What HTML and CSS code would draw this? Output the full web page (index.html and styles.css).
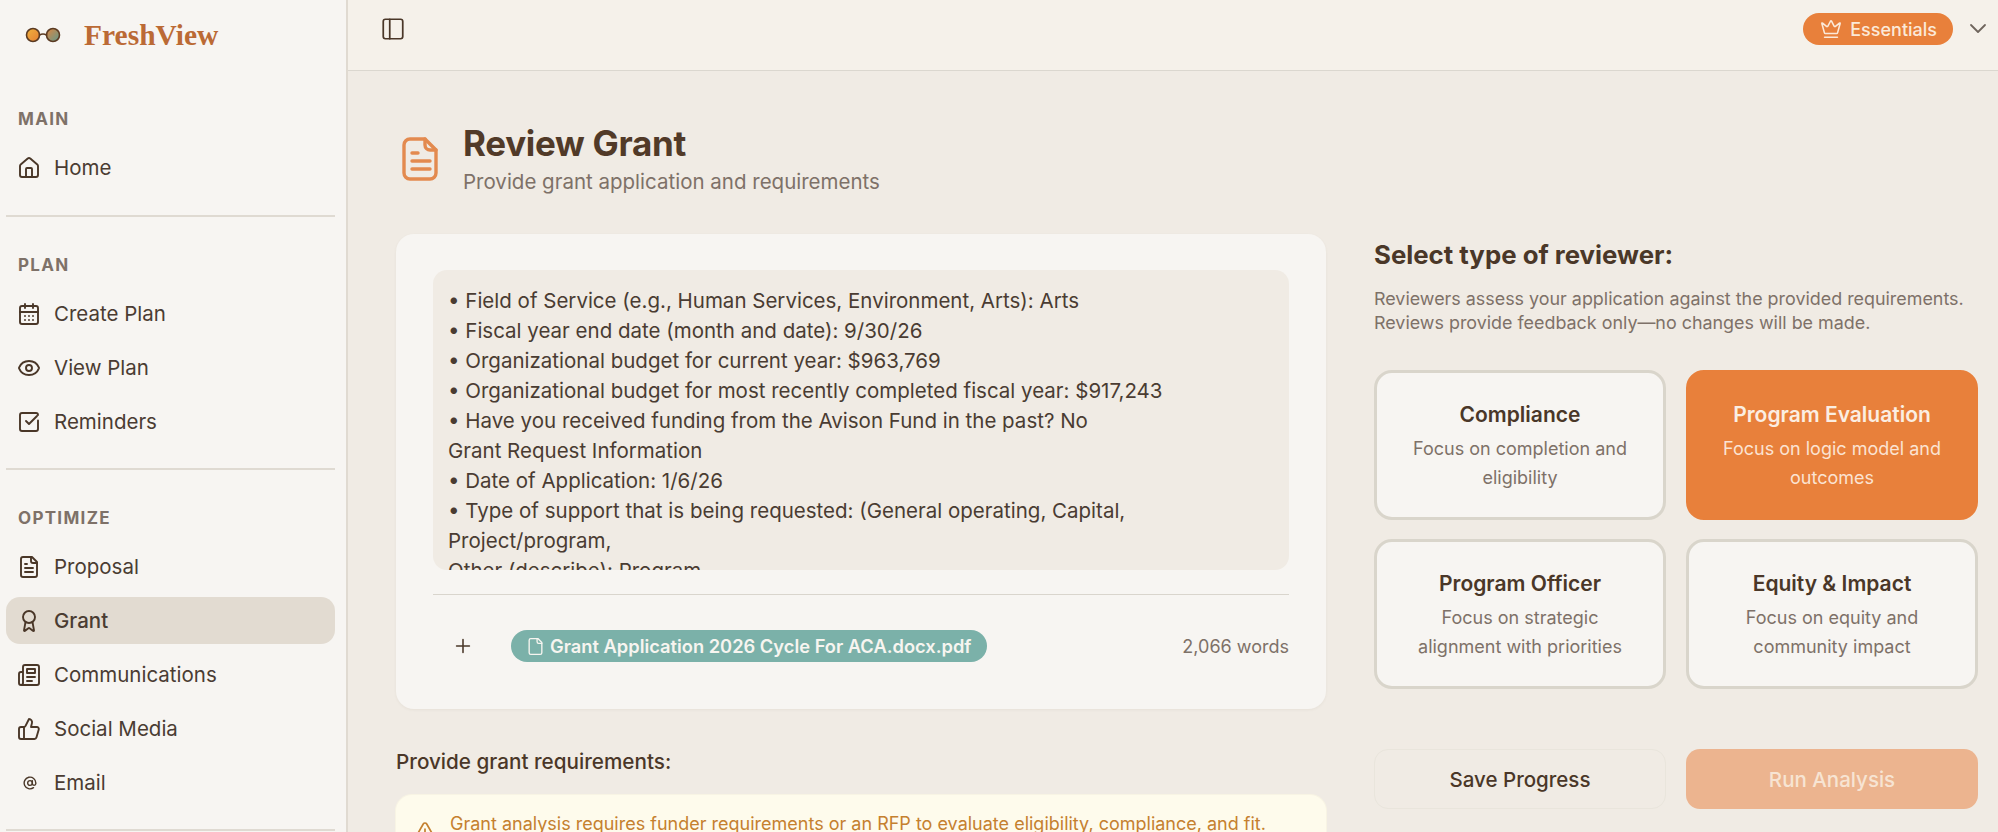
FILE: index.html
```html
<!DOCTYPE html>
<html lang="en">
<head>
<meta charset="utf-8">
<title>FreshView - Review Grant</title>
<link rel="stylesheet" href="styles.css">
</head>
<body>
<div class="app">
  <aside class="sidebar">
    <div class="brand">
      <svg class="brand-logo" viewBox="0 0 36 18">
        <defs>
          <linearGradient id="lensA" x1="0" y1="0" x2="1" y2="1"><stop offset="0" stop-color="#f0b23e"/><stop offset="1" stop-color="#e57f33"/></linearGradient>
          <linearGradient id="lensB" x1="0" y1="0" x2="1" y2="1"><stop offset="0" stop-color="#df8540"/><stop offset="1" stop-color="#5f9a8e"/></linearGradient>
        </defs>
        <circle cx="8" cy="9" r="6.5" fill="url(#lensA)" stroke="#5a3a22" stroke-width="1.6"/>
        <circle cx="28" cy="9" r="6.5" fill="url(#lensB)" stroke="#5a3a22" stroke-width="1.6"/>
        <path d="M14.5 9q3.500-2 7 0" fill="none" stroke="#5a3a22" stroke-width="1.6"/>
      </svg>
      <span class="brand-name">FreshView</span>
    </div>

    <section class="nav-group nav-main">
      <h2 class="nav-label">MAIN</h2>
      <a class="nav-item"><svg class="ico" viewBox="0 0 24 24"><path d="M15 21v-8a1 1 0 0 0-1-1h-4a1 1 0 0 0-1 1v8"/><path d="M3 10a2 2 0 0 1 .709-1.528l7-5.999a2 2 0 0 1 2.582 0l7 5.999A2 2 0 0 1 21 10v9a2 2 0 0 1-2 2H5a2 2 0 0 1-2-2z"/></svg>Home</a>
    </section>

    <section class="nav-group">
      <h2 class="nav-label">PLAN</h2>
      <a class="nav-item"><svg class="ico" viewBox="0 0 24 24"><path d="M8 2v4M16 2v4"/><rect x="3" y="4" width="18" height="18" rx="2"/><path d="M3 10h18M8 14h.01M12 14h.01M16 14h.01M8 18h.01M12 18h.01M16 18h.01"/></svg>Create Plan</a>
      <a class="nav-item"><svg class="ico" viewBox="0 0 24 24"><path d="M2.062 12.348a1 1 0 0 1 0-.696 10.750 10.750 0 0 1 19.876 0 1 1 0 0 1 0 .696 10.750 10.750 0 0 1-19.876 0"/><circle cx="12" cy="12" r="3"/></svg>View Plan</a>
      <a class="nav-item"><svg class="ico" viewBox="0 0 24 24"><path d="M21 10.500V19a2 2 0 0 1-2 2H5a2 2 0 0 1-2-2V5a2 2 0 0 1 2-2h14a2 2 0 0 1 2 2"/><path d="m9 11 3 3 8-8"/></svg>Reminders</a>
    </section>

    <section class="nav-group">
      <h2 class="nav-label">OPTIMIZE</h2>
      <a class="nav-item"><svg class="ico" viewBox="0 0 24 24"><path d="M15 2H6a2 2 0 0 0-2 2v16a2 2 0 0 0 2 2h12a2 2 0 0 0 2-2V7Z"/><path d="M14 2v4a2 2 0 0 0 2 2h4M10 9H8M16 13H8M16 17H8"/></svg>Proposal</a>
      <a class="nav-item is-active"><svg class="ico" viewBox="0 0 24 24"><path d="m15.477 12.890 1.515 8.526a.5.5 0 0 1-.81.470l-3.580-2.687a1 1 0 0 0-1.197 0l-3.586 2.686a.5.5 0 0 1-.81-.469l1.514-8.526"/><circle cx="12" cy="8" r="6"/></svg>Grant</a>
      <a class="nav-item"><svg class="ico" viewBox="0 0 24 24"><path d="M4 22h16a2 2 0 0 0 2-2V4a2 2 0 0 0-2-2H8a2 2 0 0 0-2 2v16a2 2 0 0 1-2 2Zm0 0a2 2 0 0 1-2-2v-9c0-1.100.9-2 2-2h2"/><path d="M18 14h-8M15 18h-5M10 6h8v4h-8V6Z"/></svg>Communications</a>
      <a class="nav-item"><svg class="ico" viewBox="0 0 24 24"><path d="M7 10v12"/><path d="M15 5.880 14 10h5.830a2 2 0 0 1 1.920 2.560l-2.330 8A2 2 0 0 1 17.500 22H4a2 2 0 0 1-2-2v-8a2 2 0 0 1 2-2h2.760a2 2 0 0 0 1.790-1.110L12 2a3.130 3.130 0 0 1 3 3.880Z"/></svg>Social Media</a>
      <a class="nav-item"><svg class="ico ico-small" viewBox="0 0 24 24"><circle cx="12" cy="12" r="4"/><path d="M16 8v5a3 3 0 0 0 6 0v-1a10 10 0 1 0-4 8"/></svg>Email</a>
    </section>
  </aside>

  <div class="main">
    <header class="topbar">
      <svg class="toggle" viewBox="0 0 24 24"><rect x="3" y="3" width="18" height="18" rx="2"/><path d="M9 3v18"/></svg>
      <div class="top-right">
        <span class="plan-pill"><svg class="crown" viewBox="0 0 24 24"><path d="M11.562 3.266a.5.5 0 0 1 .876 0L15.390 8.870a1 1 0 0 0 1.516.294L21.183 5.500a.5.5 0 0 1 .798.519l-2.834 10.246a1 1 0 0 1-.956.734H5.810a1 1 0 0 1-.957-.734L2.020 6.020a.5.5 0 0 1 .798-.519l4.276 3.664a1 1 0 0 0 1.516-.294z"/><path d="M5 21h14"/></svg>Essentials</span>
        <svg class="chevron" viewBox="0 0 24 24"><path d="m5 8 7 7 7-7"/></svg>
      </div>
    </header>

    <main class="content">
      <div class="page-head">
        <svg class="head-icon" viewBox="0 0 36 44"><path d="M8 2h15l11 11v23a6 6 0 0 1-6 6H8a6 6 0 0 1-6-6V8a6 6 0 0 1 6-6Z"/><path d="M23 2v6a5 5 0 0 0 5 5h6"/><path d="M10 16h6M10 24h18M10 32h18"/></svg>
        <div>
          <h1 class="page-title">Review Grant</h1>
          <p class="page-sub">Provide grant application and requirements</p>
        </div>
      </div>

      <div class="columns">
        <div class="col-left">
          <section class="doc-card">
            <div class="doc-text">• Field of Service (e.g., Human Services, Environment, Arts): Arts
• Fiscal year end date (month and date): 9/30/26
• Organizational budget for current year: $963,769
• Organizational budget for most recently completed fiscal year: $917,243
• Have you received funding from the Avison Fund in the past? No
Grant Request Information
• Date of Application: 1/6/26
• Type of support that is being requested: (General operating, Capital,
Project/program,
Other (describe): Program</div>
            <div class="doc-foot">
              <svg class="plus" viewBox="0 0 24 24"><path d="M5 12h14M12 5v14"/></svg>
              <span class="file-chip"><svg class="file-ico" viewBox="0 0 24 24"><path d="M15 2H6a2 2 0 0 0-2 2v16a2 2 0 0 0 2 2h12a2 2 0 0 0 2-2V7Z"/><path d="M14 2v4a2 2 0 0 0 2 2h4"/></svg>Grant Application 2026 Cycle For ACA.docx.pdf</span>
              <span class="word-count">2,066 words</span>
            </div>
          </section>
          <h2 class="req-title">Provide grant requirements:</h2>
          <div class="alert">
            <svg class="alert-ico" viewBox="0 0 24 24"><path d="m21.730 18-8-14a2 2 0 0 0-3.480 0l-8 14A2 2 0 0 0 4 21h16a2 2 0 0 0 1.730-3"/><path d="M12 9v4M12 17h.01"/></svg>
            <span>Grant analysis requires funder requirements or an RFP to evaluate eligibility, compliance, and fit.</span>
          </div>
        </div>

        <div class="col-right">
          <h2 class="select-title">Select type of reviewer:</h2>
          <p class="select-desc">Reviewers assess your application against the provided requirements.<br>Reviews provide feedback only—no changes will be made.</p>
          <div class="reviewers">
            <button class="rev"><strong>Compliance</strong><span>Focus on completion and eligibility</span></button>
            <button class="rev is-selected"><strong>Program Evaluation</strong><span>Focus on logic model and outcomes</span></button>
            <button class="rev"><strong>Program Officer</strong><span>Focus on strategic alignment with priorities</span></button>
            <button class="rev"><strong>Equity &amp; Impact</strong><span>Focus on equity and community impact</span></button>
          </div>
          <div class="actions">
            <button class="btn btn-save">Save Progress</button>
            <button class="btn btn-run">Run Analysis</button>
          </div>
        </div>
      </div>
    </main>
  </div>
</div>
</body>
</html>
```
FILE: styles.css
```css
* { box-sizing: border-box; }
html, body { margin: 0; height: 100%; overflow: hidden; }
body { font-family: Inter, "Liberation Sans", sans-serif; color: #4a3728; background: #f0ebe4; }
h1, h2, p { margin: 0; }
svg { fill: none; stroke: currentColor; stroke-linecap: round; stroke-linejoin: round; flex: none; }

.app { display: flex; height: 832px; overflow: hidden; }

.sidebar { width: 348px; flex: none; height: 900px; background: #f7f5f2; border-right: 2px solid #e0dad1; padding: 0 11px 0 6px; }
.brand { display: flex; align-items: center; height: 70px; padding-left: 19px; }
.brand-logo { width: 36px; height: 18px; stroke: none; }
.brand-name { margin-left: 23px; font-family: "Liberation Serif", serif; font-weight: 700; font-size: 29.500px; color: #bb6a35; }

.nav-group { border-bottom: 2px solid #dfdad2; padding-bottom: 23px; }
.nav-main { padding-top: 38px; padding-bottom: 24px; }
.nav-group + .nav-group { padding-top: 37px; }
.nav-label { font-size: 17px; line-height: 22px; font-weight: 700; letter-spacing: 1.300px; color: #7e7168; padding-left: 12px; margin-bottom: 14px; }
.nav-item { display: flex; align-items: center; height: 47px; margin-bottom: 7px; padding-left: 11px; border-radius: 14px; font-size: 20.500px; color: #4a3c32; }
.nav-item:last-child { margin-bottom: 0; }
.nav-item .ico { width: 24px; height: 24px; stroke-width: 1.900; margin-right: 13px; color: #4a3728; }
.nav-item .ico-small { width: 14px; height: 14px; margin: 0 17px 0 6px; stroke-width: 2.400; }
.nav-item.is-active { background: #e2dbd1; font-weight: 500; }

.main { flex: 1; min-width: 0; display: flex; flex-direction: column; }
.topbar { height: 71px; flex: none; display: flex; align-items: center; justify-content: space-between; background: #f5f1ea; border-bottom: 1px solid #dbd7cf; padding: 0 8px 12px 32px; }
.toggle { width: 26px; height: 26px; stroke-width: 1.600; color: #4a3728; }
.top-right { display: flex; align-items: center; gap: 13px; }
.plan-pill { display: flex; align-items: center; gap: 8px; height: 32px; padding: 0 16px 0 17px; border-radius: 16px; background: #e8803b; color: #fbe9d9; font-size: 18px; font-weight: 500; }
.crown { width: 22px; height: 22px; stroke-width: 1.700; }
.chevron { width: 24px; height: 24px; stroke-width: 1.800; color: #6f655d; }

.content { flex: 1; padding: 0 20px 0 48px; overflow: hidden; }
.page-head { display: flex; align-items: center; height: 163px; padding-top: 13px; }
.head-icon { width: 36px; height: 44px; margin: 0 25px 0 6px; stroke-width: 3.400; color: #e38a4f; }
.page-title { font-size: 35px; line-height: 44px; font-weight: 700; letter-spacing: -0.300px; color: #513a28; }
.page-sub { font-size: 20.500px; line-height: 30px; margin-top: 2px; color: #7e7168; }

.columns { display: grid; grid-template-columns: 930px 604px; column-gap: 48px; align-items: start; }

.doc-card { height: 475px; background: #f7f5f2; border-radius: 18px; padding: 36px 37px 0; box-shadow: 0 1px 3px rgba(90, 70, 50, .06); }
.doc-text { height: 300px; overflow: hidden; background: #f0ebe4; border-radius: 14px; padding: 16px 15px 0; font-size: 20.500px; line-height: 30px; white-space: pre-wrap; color: #4a3c32; }
.doc-foot { display: flex; align-items: center; margin-top: 24px; padding: 34px 0 0 19px; border-top: 1px solid #d9d5cd; height: 69px; }
.plus { width: 22px; height: 22px; stroke-width: 1.700; color: #4a3728; }
.file-chip { display: flex; align-items: center; gap: 5px; height: 32px; margin-left: 37px; padding: 0 16px 0 15px; border-radius: 16px; background: #7bb1a9; color: #f7f5f0; font-size: 18.300px; font-weight: 600; white-space: nowrap; }
.file-ico { width: 19px; height: 19px; stroke-width: 1.700; }
.word-count { margin-left: auto; font-size: 18px; color: #7e7168; }

.req-title { margin-top: 40px; font-size: 20.700px; line-height: 26px; font-weight: 500; color: #4a3728; }
.alert { display: flex; align-items: flex-start; gap: 13px; margin-top: 20px; padding: 17px 17px; border-radius: 16px; background: #fefbec; color: #c5802f; font-size: 18px; line-height: 24px; box-shadow: 0 0 0 1px #f8f4e4; }
.alert-ico { width: 24px; height: 24px; margin-top: 8px; stroke-width: 1.700; color: #c5802f; }

.select-title { margin-top: 5px; font-size: 25.800px; line-height: 32px; font-weight: 700; color: #4a3728; }
.select-desc { margin-top: 16px; font-size: 17.900px; line-height: 24px; color: #7e7168; }
.reviewers { display: grid; grid-template-columns: 292px 292px; column-gap: 20px; row-gap: 19px; margin-top: 35px; }
.rev { height: 150px; display: flex; flex-direction: column; align-items: center; padding: 28px 24px 0; background: #f7f5f2; border: 3px solid #d9d5cb; border-radius: 18px; font-family: inherit; color: #4a3728; cursor: pointer; }
.rev strong { font-size: 21px; line-height: 28px; font-weight: 600; }
.rev span { margin-top: 5px; font-size: 18px; line-height: 29px; color: #7e7168; }
.rev.is-selected { background: #e8803b; border-color: #e8803b; color: #fbeee2; }
.rev.is-selected span { color: #fbe3d2; }

.actions { display: grid; grid-template-columns: 292px 292px; column-gap: 20px; margin-top: 60px; }
.btn { height: 60px; border-radius: 14px; font-family: inherit; font-size: 20.500px; font-weight: 500; cursor: pointer; }
.btn-save { background: #f0ebe4; border: 1px solid #e9e5dc; color: #4a3728; }
.btn-run { background: #ecb48f; border: 0; color: #f7e4d3; }
```
